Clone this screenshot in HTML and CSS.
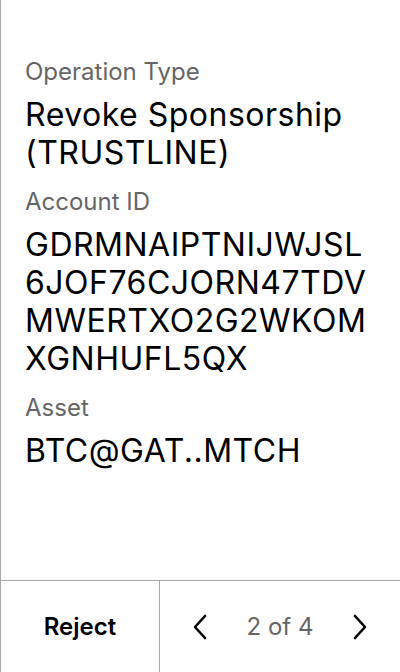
FILE: index.html
```html
<!DOCTYPE html>
<html>
<head>
<meta charset="utf-8">
<link rel="stylesheet" href="styles.css">
</head>
<body>
<div class="screen">
  <div class="content">
    <div class="field">
      <div class="label">Operation Type</div>
      <div class="value">Revoke Sponsorship (TRUSTLINE)</div>
    </div>
    <div class="field">
      <div class="label">Account ID</div>
      <div class="value">GDRMNAIPTNIJWJSL 6JOF76CJORN47TDV MWERTXO2G2WKOM XGNHUFL5QX</div>
    </div>
    <div class="field">
      <div class="label">Asset</div>
      <div class="value">BTC@GAT..MTCH</div>
    </div>
  </div>
  <div class="footer">
    <div class="reject">Reject</div>
    <div class="pager">
      <svg class="chev" width="20" height="28" viewBox="0 0 20 28"><path d="M15 3 L5 14 L15 25" fill="none" stroke="#000" stroke-width="2.6" stroke-linecap="round" stroke-linejoin="round"/></svg>
      <span class="count">2 of 4</span>
      <svg class="chev" width="20" height="28" viewBox="0 0 20 28"><path d="M5 3 L15 14 L5 25" fill="none" stroke="#000" stroke-width="2.6" stroke-linecap="round" stroke-linejoin="round"/></svg>
    </div>
  </div>
</div>
</body>
</html>
```
FILE: styles.css
```css
* { box-sizing: border-box; }
html, body { margin: 0; padding: 0; background: #fff; }
body { font-family: Inter, "Noto Sans", sans-serif; color: #000; }
.screen {
  width: 400px;
  height: 672px;
  border-left: 1px solid #a8a8a8;
  display: flex;
  flex-direction: column;
}
.content {
  flex: 1;
  padding: 56px 24px 0 24px;
  display: flex;
  flex-direction: column;
  gap: 14px;
}
.field { display: flex; flex-direction: column; gap: 8px; }
.label {
  font-size: 24px;
  line-height: 32px;
  color: #666;
}
.value {
  font-size: 32px;
  line-height: 38px;
  letter-spacing: 0.5px;
  color: #000;
}
.footer {
  height: 92px;
  border-top: 1px solid #a8a8a8;
  display: flex;
}
.reject {
  width: 159px;
  border-right: 1px solid #a8a8a8;
  display: flex;
  align-items: center;
  justify-content: center;
  font-size: 24px;
  font-weight: 600;
}
.pager {
  flex: 1;
  display: flex;
  align-items: center;
  justify-content: space-between;
  padding: 0 30px;
}
.count { font-size: 24px; color: #666; }
.chev { display: block; }
```
